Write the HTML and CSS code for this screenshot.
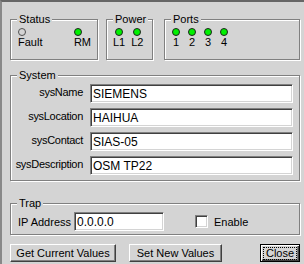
FILE: index.html
```html
<!DOCTYPE html>
<html>
<head>
    <title>Agent Properties</title>
    <link rel="stylesheet" href="styles.css">
</head>
<body>
<div class="window">
  <div class="indicators">
    <fieldset class="group status">
      <legend>Status</legend>
      <div class="leds">
        <div class="ind"><span class="led off"></span><span>Fault</span></div>
        <div class="ind"><span class="led"></span><span>RM</span></div>
      </div>
    </fieldset>
    <fieldset class="group power">
      <legend>Power</legend>
      <div class="leds">
        <div class="ind"><span class="led"></span><span>L1</span></div>
        <div class="ind"><span class="led"></span><span>L2</span></div>
      </div>
    </fieldset>
    <fieldset class="group ports">
      <legend>Ports</legend>
      <div class="leds">
        <div class="ind"><span class="led"></span><span>1</span></div>
        <div class="ind"><span class="led"></span><span>2</span></div>
        <div class="ind"><span class="led"></span><span>3</span></div>
        <div class="ind"><span class="led"></span><span>4</span></div>
      </div>
    </fieldset>
  </div>

  <fieldset class="group system">
    <legend>System</legend>
    <div class="fields">
      <label for="sysName">sysName</label>
      <input class="text" id="sysName" value="SIEMENS">
      <label for="sysLocation">sysLocation</label>
      <input class="text" id="sysLocation" value="HAIHUA">
      <label for="sysContact">sysContact</label>
      <input class="text" id="sysContact" value="SIAS-05">
      <label for="sysDescription">sysDescription</label>
      <input class="text" id="sysDescription" value="OSM TP22">
    </div>
  </fieldset>

  <fieldset class="group trap">
    <legend>Trap</legend>
    <div class="trap-row">
      <label class="ip-label" for="ip">IP Address</label>
      <input class="text ip" id="ip" value="0.0.0.0">
      <input class="check" type="checkbox" id="enable">
      <label class="enable-label" for="enable">Enable</label>
    </div>
  </fieldset>

  <div class="actions">
    <button type="button" class="get">Get Current Values</button>
    <button type="button" class="set">Set New Values</button>
    <button type="button" class="close"><span>Close</span></button>
  </div>
</div>
</body>
</html>
```

FILE: styles.css
```css
body {
    margin: 0;
    background-color: #d4d4d4;
    font-family: "Liberation Sans", Arial, sans-serif;
    font-size: 11px;
    color: #000;
}
.window {
    height: 264px;
    box-sizing: border-box;
    border-top: 2px solid #666;
    border-left: 2px solid #888;
    padding: 11px 4px 0 8px;
}
fieldset {
    margin: 0;
    padding: 0;
    min-width: 0;
    box-sizing: border-box;
    border: 1px solid #808080;
    box-shadow: inset 1px 1px 0 #fff, 1px 1px 0 #fff;
}
legend {
    margin-left: 6px;
    padding: 0 2px;
    line-height: 13px;
    background-color: #d4d4d4;
}

/* indicator boxes */
.indicators {
    display: flex;
    margin-bottom: 9px;
}
.status {
    width: 88px;
    margin-right: 8px;
}
.power {
    width: 47px;
    margin-right: 11px;
}
.ports {
    width: 136px;
}
.leds {
    display: flex;
    gap: 6px;
    padding: 2px 6px 11px 6px;
}
.status .leds {
    justify-content: space-between;
    padding-left: 7px;
}
.ind {
    display: flex;
    flex-direction: column;
    align-items: center;
    line-height: 12px;
}
.status .ind {
    align-items: flex-start;
}
.ports .ind {
    width: 10px;
}
.led {
    width: 8px;
    height: 8px;
    box-sizing: border-box;
    border-radius: 50%;
    border: 1px solid #202020;
    background-color: #00f000;
}
.led.off {
    background-color: transparent;
    border-color: #505050;
}

/* system fields */
.fields {
    display: grid;
    grid-template-columns: 72px 203px;
    column-gap: 7px;
    row-gap: 5px;
    padding: 2px 6px 5px 0;
    align-items: start;
}
.fields label {
    text-align: right;
    letter-spacing: -0.3px;
    line-height: 13px;
    padding-top: 2px;
}
.text {
    box-sizing: border-box;
    width: 203px;
    height: 19px;
    margin: 0;
    padding: 0 2px;
    border: 1px solid;
    border-color: #808080 #fff #fff #808080;
    box-shadow: inset 1px 1px 0 #404040, inset -1px -1px 0 #d4d4d4;
    background-color: #fff;
    color: #000;
    font-family: "Liberation Sans", Arial, sans-serif;
    font-size: 12px;
    outline: none;
}

/* trap */
.trap {
    margin-top: 16px;
}
.trap-row {
    display: flex;
    align-items: center;
    padding: 2px 0 3px 7px;
}
.ip-label {
    width: 56px;
}
.text.ip {
    width: 90px;
}
.check {
    appearance: none;
    width: 13px;
    height: 13px;
    margin: 0 0 0 31px;
    box-sizing: border-box;
    border: 1px solid;
    border-color: #808080 #fff #fff #808080;
    box-shadow: inset 1px 1px 0 #404040, inset -1px -1px 0 #d4d4d4;
    background-color: #fff;
}
.enable-label {
    margin-left: 6px;
}

/* buttons */
.actions {
    display: flex;
    margin-top: 9px;
}
button {
    height: 18px;
    padding: 0;
    box-sizing: border-box;
    background-color: #d4d4d4;
    border: 1px solid;
    border-color: #fff #404040 #404040 #fff;
    box-shadow: inset -1px -1px 0 #808080;
    font-family: "Liberation Sans", Arial, sans-serif;
    font-size: 11px;
    color: #000;
}
.get {
    width: 106px;
}
.set {
    width: 93px;
    margin-left: 13px;
}
.close {
    width: 40px;
    margin-left: auto;
    border: 1px solid #000;
    box-shadow: inset 1px 1px 0 #fff, inset -1px -1px 0 #404040, inset -2px -2px 0 #808080;
}
.close span {
    display: block;
    margin: 0 3px;
    line-height: 11px;
    outline: 1px dotted #000;
}
```
